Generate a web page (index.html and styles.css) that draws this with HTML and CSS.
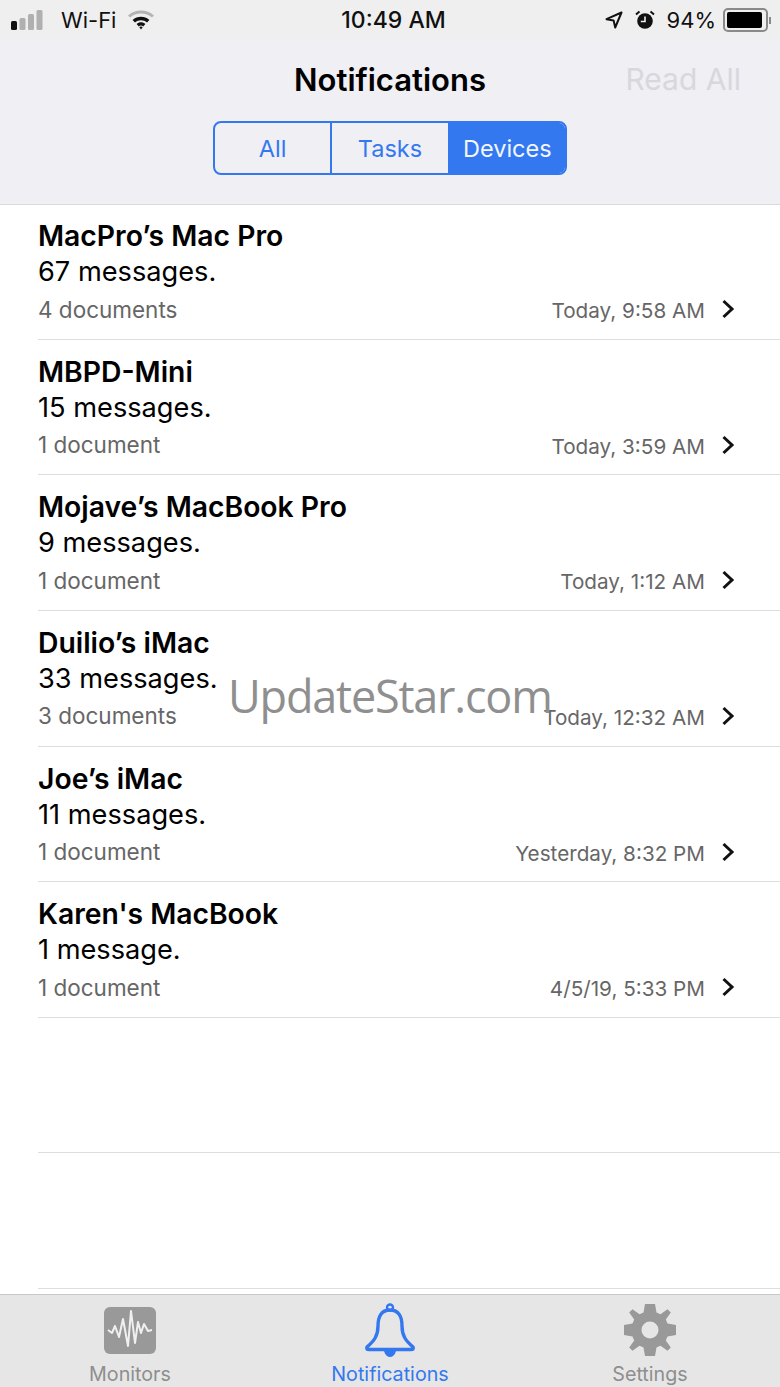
FILE: index.html
```html
<!DOCTYPE html>
<html lang="en">
<head>
    <meta charset="UTF-8">
    <meta name="viewport" content="width=device-width, initial-scale=1.0">
    <title>Notifications</title>
    <link rel="stylesheet" href="styles.css">
</head>
<body>
    <div class="app">
        <div class="status-bar">
            <div class="status-left">
                <svg class="signal" width="32" height="20" viewBox="0 0 32 20">
                    <rect x="0" y="11" width="6" height="9" rx="1.5" fill="#111"/>
                    <rect x="8.5" y="8" width="6" height="12" rx="1.5" fill="#b0b0b0"/>
                    <rect x="17" y="4" width="6" height="16" rx="1.5" fill="#b0b0b0"/>
                    <rect x="25.5" y="0" width="6" height="20" rx="1.5" fill="#b0b0b0"/>
                </svg>
                <span class="carrier">Wi-Fi</span>
                <svg class="wifi" width="26" height="20" viewBox="0 0 26 20">
                    <path d="M1 6.5C7.8 0.5 18.2 0.5 25 6.5" fill="none" stroke="#b4b4b4" stroke-width="3"/>
                    <path d="M4.6 10C9.4 5.8 16.6 5.8 21.4 10L19 12.6C15.6 9.6 10.4 9.6 7 12.6Z" fill="#111"/>
                    <path d="M8.6 14C11.1 11.8 14.9 11.8 17.4 14L15.2 16.4C13.9 15.3 12.1 15.3 10.8 16.4Z" fill="#111"/>
                    <path d="M11.3 17.2C12.3 16.4 13.7 16.4 14.7 17.2L13 19.4Z" fill="#111"/>
                </svg>
            </div>
            <div class="status-time">10:49 AM</div>
            <div class="status-right">
                <svg width="18" height="18" viewBox="0 0 18 18">
                    <path d="M16.5 1.5L1.5 8.2L8.6 9.4L10.2 16.5Z" fill="none" stroke="#111" stroke-width="2" stroke-linejoin="round"/>
                </svg>
                <svg class="alarm" width="20" height="20" viewBox="0 0 20 20">
                    <circle cx="10" cy="11" r="7.8" fill="#111"/>
                    <path d="M10 6.5V11.5H5.8" fill="none" stroke="#efeff0" stroke-width="1.6"/>
                    <path d="M1 4.5L4.5 1.5M19 4.5L15.5 1.5" stroke="#111" stroke-width="2"/>
                </svg>
                <span class="battery-text">94%</span>
                <div class="battery"><div class="battery-fill"></div></div>
                <div class="battery-cap"></div>
            </div>
        </div>

        <div class="nav-bar">
            <div class="nav-title-row">
                <h1 class="nav-title">Notifications</h1>
                <span class="read-all">Read All</span>
            </div>
            <div class="segments">
                <div class="segment">All</div>
                <div class="segment">Tasks</div>
                <div class="segment active">Devices</div>
            </div>
        </div>

        <div class="list">
            <div class="row">
                <div class="row-title">MacPro’s Mac Pro</div>
                <div class="row-sub">67 messages.</div>
                <div class="row-meta">
                    <span class="row-docs">4 documents</span>
                    <span class="row-date">Today, 9:58 AM</span>
                    <svg class="chevron" width="14" height="20" viewBox="0 0 14 20"><path d="M2.5 2L11 10L2.5 18" /></svg>
                </div>
            </div>
            <div class="row">
                <div class="row-title">MBPD-Mini</div>
                <div class="row-sub">15 messages.</div>
                <div class="row-meta">
                    <span class="row-docs">1 document</span>
                    <span class="row-date">Today, 3:59 AM</span>
                    <svg class="chevron" width="14" height="20" viewBox="0 0 14 20"><path d="M2.5 2L11 10L2.5 18" /></svg>
                </div>
            </div>
            <div class="row">
                <div class="row-title">Mojave’s MacBook Pro</div>
                <div class="row-sub">9 messages.</div>
                <div class="row-meta">
                    <span class="row-docs">1 document</span>
                    <span class="row-date">Today, 1:12 AM</span>
                    <svg class="chevron" width="14" height="20" viewBox="0 0 14 20"><path d="M2.5 2L11 10L2.5 18" /></svg>
                </div>
            </div>
            <div class="row">
                <div class="row-title">Duilio’s iMac</div>
                <div class="row-sub">33 messages.</div>
                <div class="row-meta">
                    <span class="row-docs">3 documents</span>
                    <span class="row-date">Today, 12:32 AM</span>
                    <svg class="chevron" width="14" height="20" viewBox="0 0 14 20"><path d="M2.5 2L11 10L2.5 18" /></svg>
                </div>
            </div>
            <div class="row">
                <div class="row-title">Joe’s iMac</div>
                <div class="row-sub">11 messages.</div>
                <div class="row-meta">
                    <span class="row-docs">1 document</span>
                    <span class="row-date">Yesterday, 8:32 PM</span>
                    <svg class="chevron" width="14" height="20" viewBox="0 0 14 20"><path d="M2.5 2L11 10L2.5 18" /></svg>
                </div>
            </div>
            <div class="row">
                <div class="row-title">Karen's MacBook</div>
                <div class="row-sub">1 message.</div>
                <div class="row-meta">
                    <span class="row-docs">1 document</span>
                    <span class="row-date">4/5/19, 5:33 PM</span>
                    <svg class="chevron" width="14" height="20" viewBox="0 0 14 20"><path d="M2.5 2L11 10L2.5 18" /></svg>
                </div>
            </div>
            <div class="row"></div>
            <div class="row"></div>
            <div class="watermark">UpdateStar.com</div>
        </div>

        <div class="tab-bar">
            <div class="tab">
                <div class="tab-icon">
                    <svg width="52" height="47" viewBox="0 0 52 47">
                        <rect width="52" height="47" rx="6" fill="#999"/>
                        <path d="M4 23L8 26L11 19L15 30L19 12L24 39L27 4L31 36L34 15L37 26L40 17L44 24L48 23" fill="none" stroke="#f0f0f0" stroke-width="2" stroke-linejoin="round"/>
                    </svg>
                </div>
                <span class="tab-label">Monitors</span>
            </div>
            <div class="tab active">
                <div class="tab-icon">
                    <svg width="52" height="55" viewBox="0 0 52 55">
                        <circle cx="26" cy="4.5" r="3" fill="none" stroke="#3478f0" stroke-width="2.4"/>
                        <path d="M26 7C17 7 14 14 14 23C14 33 10 38 3 44C2 46 3 46.5 5 46.5H47C49 46.5 50 46 49 44C42 38 38 33 38 23C38 14 35 7 26 7Z" fill="none" stroke="#3478f0" stroke-width="3.4" stroke-linejoin="round"/>
                        <path d="M20 48H32C31 52 28.5 54 26 54C23.5 54 21 52 20 48Z" fill="#3478f0"/>
                    </svg>
                </div>
                <span class="tab-label">Notifications</span>
            </div>
            <div class="tab">
                <div class="tab-icon">
                    <svg width="52" height="52" viewBox="0 0 52 52">
                        <path fill="#999" fill-rule="evenodd" d="M21 0H31L32.5 8.5L36.5 10.2L43.5 5.2L46.8 8.5L41.8 15.5L43.5 19.5L52 21V31L43.5 32.5L41.8 36.5L46.8 43.5L43.5 46.8L36.5 41.8L32.5 43.5L31 52H21L19.5 43.5L15.5 41.8L8.5 46.8L5.2 43.5L10.2 36.5L8.5 32.5L0 31V21L8.5 19.5L10.2 15.5L5.2 8.5L8.5 5.2L15.5 10.2L19.5 8.5ZM26 17.5A8.5 8.5 0 1 0 26 34.5A8.5 8.5 0 1 0 26 17.5Z"/>
                    </svg>
                </div>
                <span class="tab-label">Settings</span>
            </div>
        </div>
    </div>
</body>
</html>
```

FILE: styles.css
```css
/* Global styles */
html, body {
    margin: 0;
    padding: 0;
    height: 100%;
}
body {
    font-family: 'Inter', 'Liberation Sans', sans-serif;
    background: #fff;
    color: #000;
    overflow: hidden;
}
.app {
    display: flex;
    flex-direction: column;
    height: 1387px;
}

/* Status bar */
.status-bar {
    height: 40px;
    flex: none;
    background: #efeff0;
    display: flex;
    align-items: center;
    justify-content: space-between;
    position: relative;
    padding: 0 9px 0 11px;
    font-size: 22px;
    color: #111;
}
.status-left, .status-right {
    display: flex;
    align-items: center;
}
.carrier {
    margin-left: 18px;
}
.wifi {
    margin-left: 12px;
}
.status-time {
    position: absolute;
    left: 7px;
    right: 0;
    text-align: center;
    font-size: 23px;
    font-weight: 500;
    pointer-events: none;
}
.alarm {
    margin-left: 12px;
}
.battery-text {
    margin-left: 12px;
}
.battery {
    margin-left: 7px;
    width: 37px;
    height: 16px;
    border: 2px solid #8a8a8a;
    border-radius: 5px;
    padding: 2px;
    display: flex;
}
.battery-fill {
    width: 94%;
    background: #000;
    border-radius: 2px;
}
.battery-cap {
    width: 2px;
    height: 7px;
    background: #8a8a8a;
    margin-left: 1px;
}

/* Nav bar */
.nav-bar {
    height: 165px;
    flex: none;
    box-sizing: border-box;
    background: #efeff4;
    border-bottom: 1px solid #d9d9dc;
    display: flex;
    flex-direction: column;
    align-items: center;
}
.nav-title-row {
    position: relative;
    align-self: stretch;
    height: 81px;
    display: flex;
    justify-content: center;
    align-items: center;
}
.nav-title {
    margin: 0 0 3px;
    font-size: 31px;
    font-weight: 600;
}
.read-all {
    position: absolute;
    right: 39px;
    top: 21px;
    font-size: 30px;
    color: #d8d8dc;
}
.segments {
    display: flex;
    width: 354px;
    height: 54px;
    box-sizing: border-box;
    border: 2px solid #3478f0;
    border-radius: 8px;
    overflow: hidden;
}
.segment {
    flex: 1;
    display: flex;
    align-items: center;
    justify-content: center;
    font-size: 23.5px;
    color: #3478f0;
    border-left: 2px solid #3478f0;
}
.segment:first-child {
    border-left: none;
}
.segment.active {
    background: #3478f0;
    color: #f2f6fe;
}

/* List */
.list {
    flex: 1;
    position: relative;
    display: flex;
    flex-direction: column;
    margin-top: -1px;
    padding-left: 38px;
    overflow: hidden;
}
.row {
    height: 135.65px;
    flex: none;
    box-sizing: border-box;
    border-bottom: 1px solid #dedede;
    padding: 14px 46px 0 0;
}
.row-title {
    font-size: 28.3px;
    font-weight: 600;
    line-height: 36px;
    margin-bottom: -1px;
}
.row-sub {
    font-size: 27.2px;
    line-height: 37px;
}
.row-meta {
    display: flex;
    align-items: center;
    line-height: 36px;
    color: #666;
}
.row-docs {
    flex: 1;
    font-size: 22.5px;
}
.row-date {
    font-size: 20.7px;
    margin-top: 3px;
}
.chevron {
    margin-left: 16px;
    margin-right: -1px;
    margin-top: -1px;
}
.chevron path {
    fill: none;
    stroke: #111;
    stroke-width: 3;
}
.watermark {
    position: absolute;
    left: 228px;
    top: 461px;
    font-family: 'Open Sans', sans-serif;
    font-size: 45px;
    letter-spacing: -1.2px;
    color: #8f8f8f;
}

/* Tab bar */
.tab-bar {
    height: 93px;
    flex: none;
    box-sizing: border-box;
    background: #e6e6e6;
    border-top: 1px solid #c8c8c8;
    margin-top: -1px;
    display: flex;
}
.tab {
    flex: 1;
    display: flex;
    flex-direction: column;
    align-items: center;
    padding-top: 5px;
    color: #8e8e8e;
}
.tab.active {
    color: #3478f0;
}
.tab-icon {
    height: 60px;
    display: flex;
    align-items: center;
}
.tab-label {
    font-size: 19.7px;
    line-height: 24px;
    margin-top: 2px;
}
```
